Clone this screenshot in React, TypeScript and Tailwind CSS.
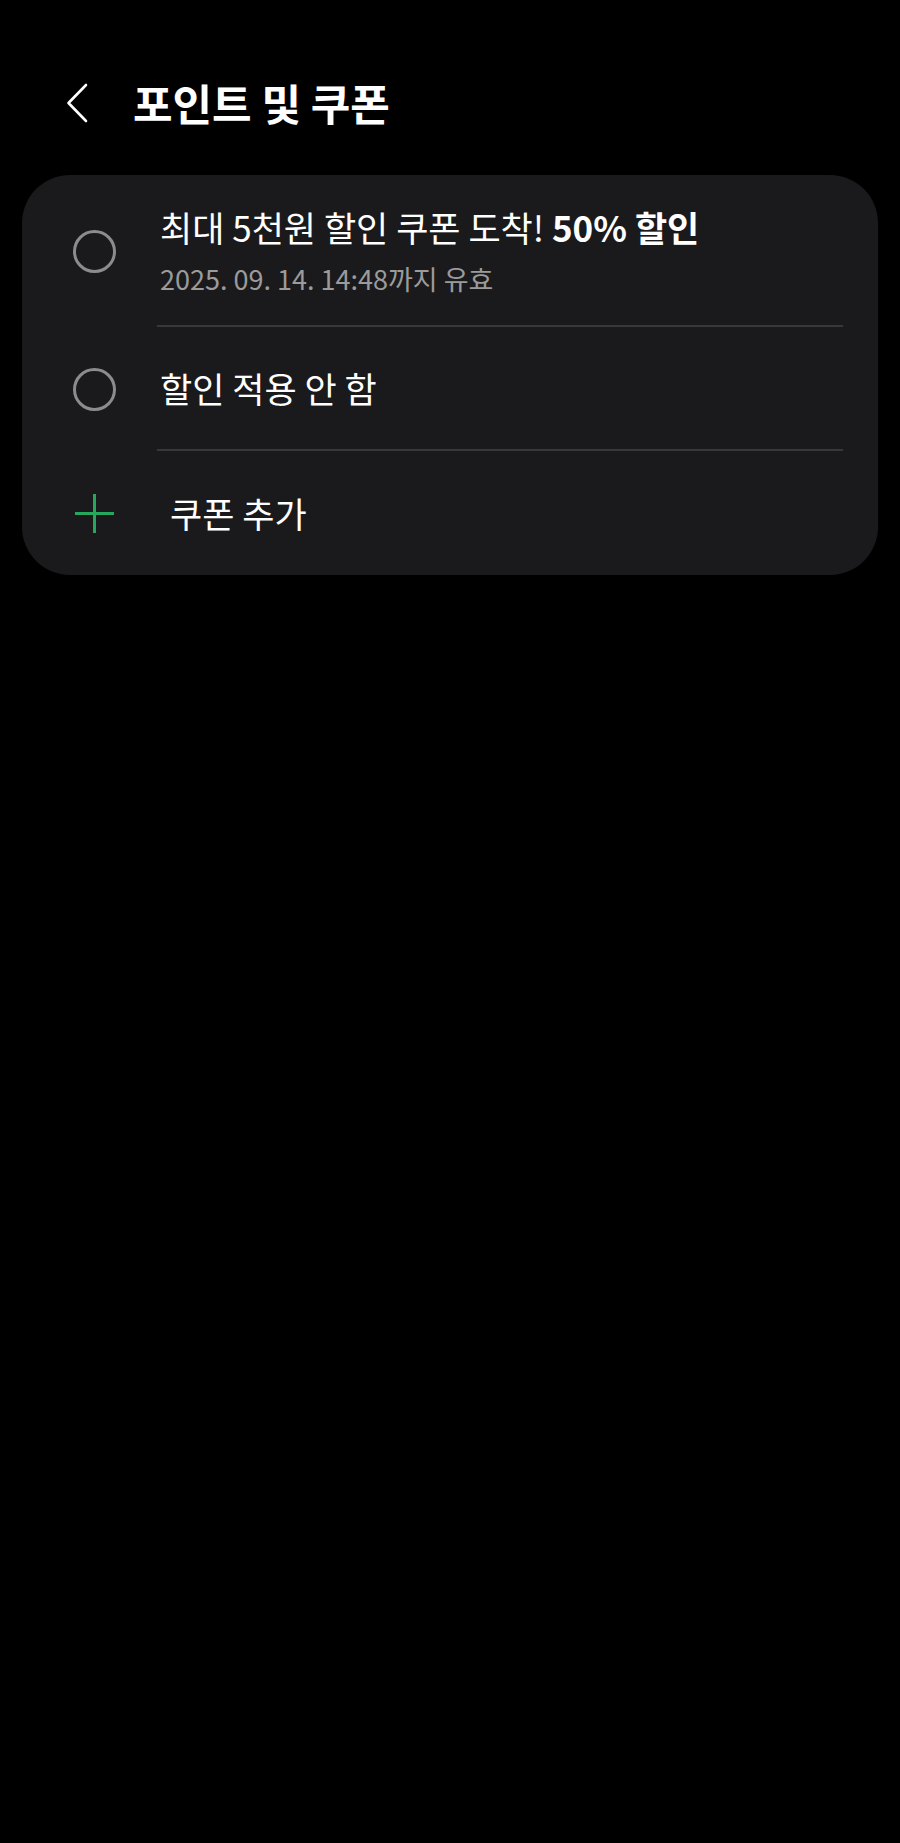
export default function App() {
  return (
    <div className="min-h-[1843px] w-full bg-black pt-[80px] font-['Noto_Sans_CJK_KR',sans-serif] text-white">
      {/* Header */}
      <header className="mb-[50px] flex h-[45px] items-center pl-[66px]">
        <svg width="22" height="40" viewBox="0 0 22 40" fill="none" className="shrink-0">
          <path d="M20 2 L2.5 20 L20 38" stroke="#ffffff" strokeWidth="2.6" strokeLinecap="round" strokeLinejoin="round" />
        </svg>
        <h1 className="ml-[45px] text-[43px] font-bold leading-none">포인트 및 쿠폰</h1>
      </header>

      {/* Coupon list */}
      <div className="mx-[22px] rounded-[48px] bg-[#1a1a1c]">
        <div className="flex h-[152px]">
          <div className="flex w-[135px] items-center pl-[51px]">
            <span className="h-[43px] w-[43px] rounded-full border-[3px] border-[#8c8c8c]" />
          </div>
          <div className="mr-[35px] flex flex-1 flex-col justify-center gap-[13px] border-b-2 border-[#38383a] pl-[3px]">
            <p className="text-[35px] leading-[44px]">
              최대 5천원 할인 쿠폰 도착! <span className="font-bold">50% 할인</span>
            </p>
            <p className="text-[27px] leading-[34px] text-[#9b9b9b]">2025. 09. 14. 14:48까지 유효</p>
          </div>
        </div>

        <div className="flex h-[124px]">
          <div className="flex w-[135px] items-center pl-[51px]">
            <span className="h-[43px] w-[43px] rounded-full border-[3px] border-[#8c8c8c]" />
          </div>
          <div className="mr-[35px] flex flex-1 items-center border-b-2 border-[#38383a] pl-[3px]">
            <p className="text-[35px] leading-[44px]">할인 적용 안 함</p>
          </div>
        </div>

        <div className="flex h-[124px]">
          <div className="flex w-[135px] items-center pl-[52px]">
            <svg width="41" height="41" viewBox="0 0 41 41" fill="none">
              <path d="M20.5 1 V40 M1 20.5 H40" stroke="#26a85c" strokeWidth="3" />
            </svg>
          </div>
          <div className="flex flex-1 items-center pl-[13px]">
            <p className="text-[35px] leading-[44px]">쿠폰 추가</p>
          </div>
        </div>
      </div>
    </div>
  );
}
